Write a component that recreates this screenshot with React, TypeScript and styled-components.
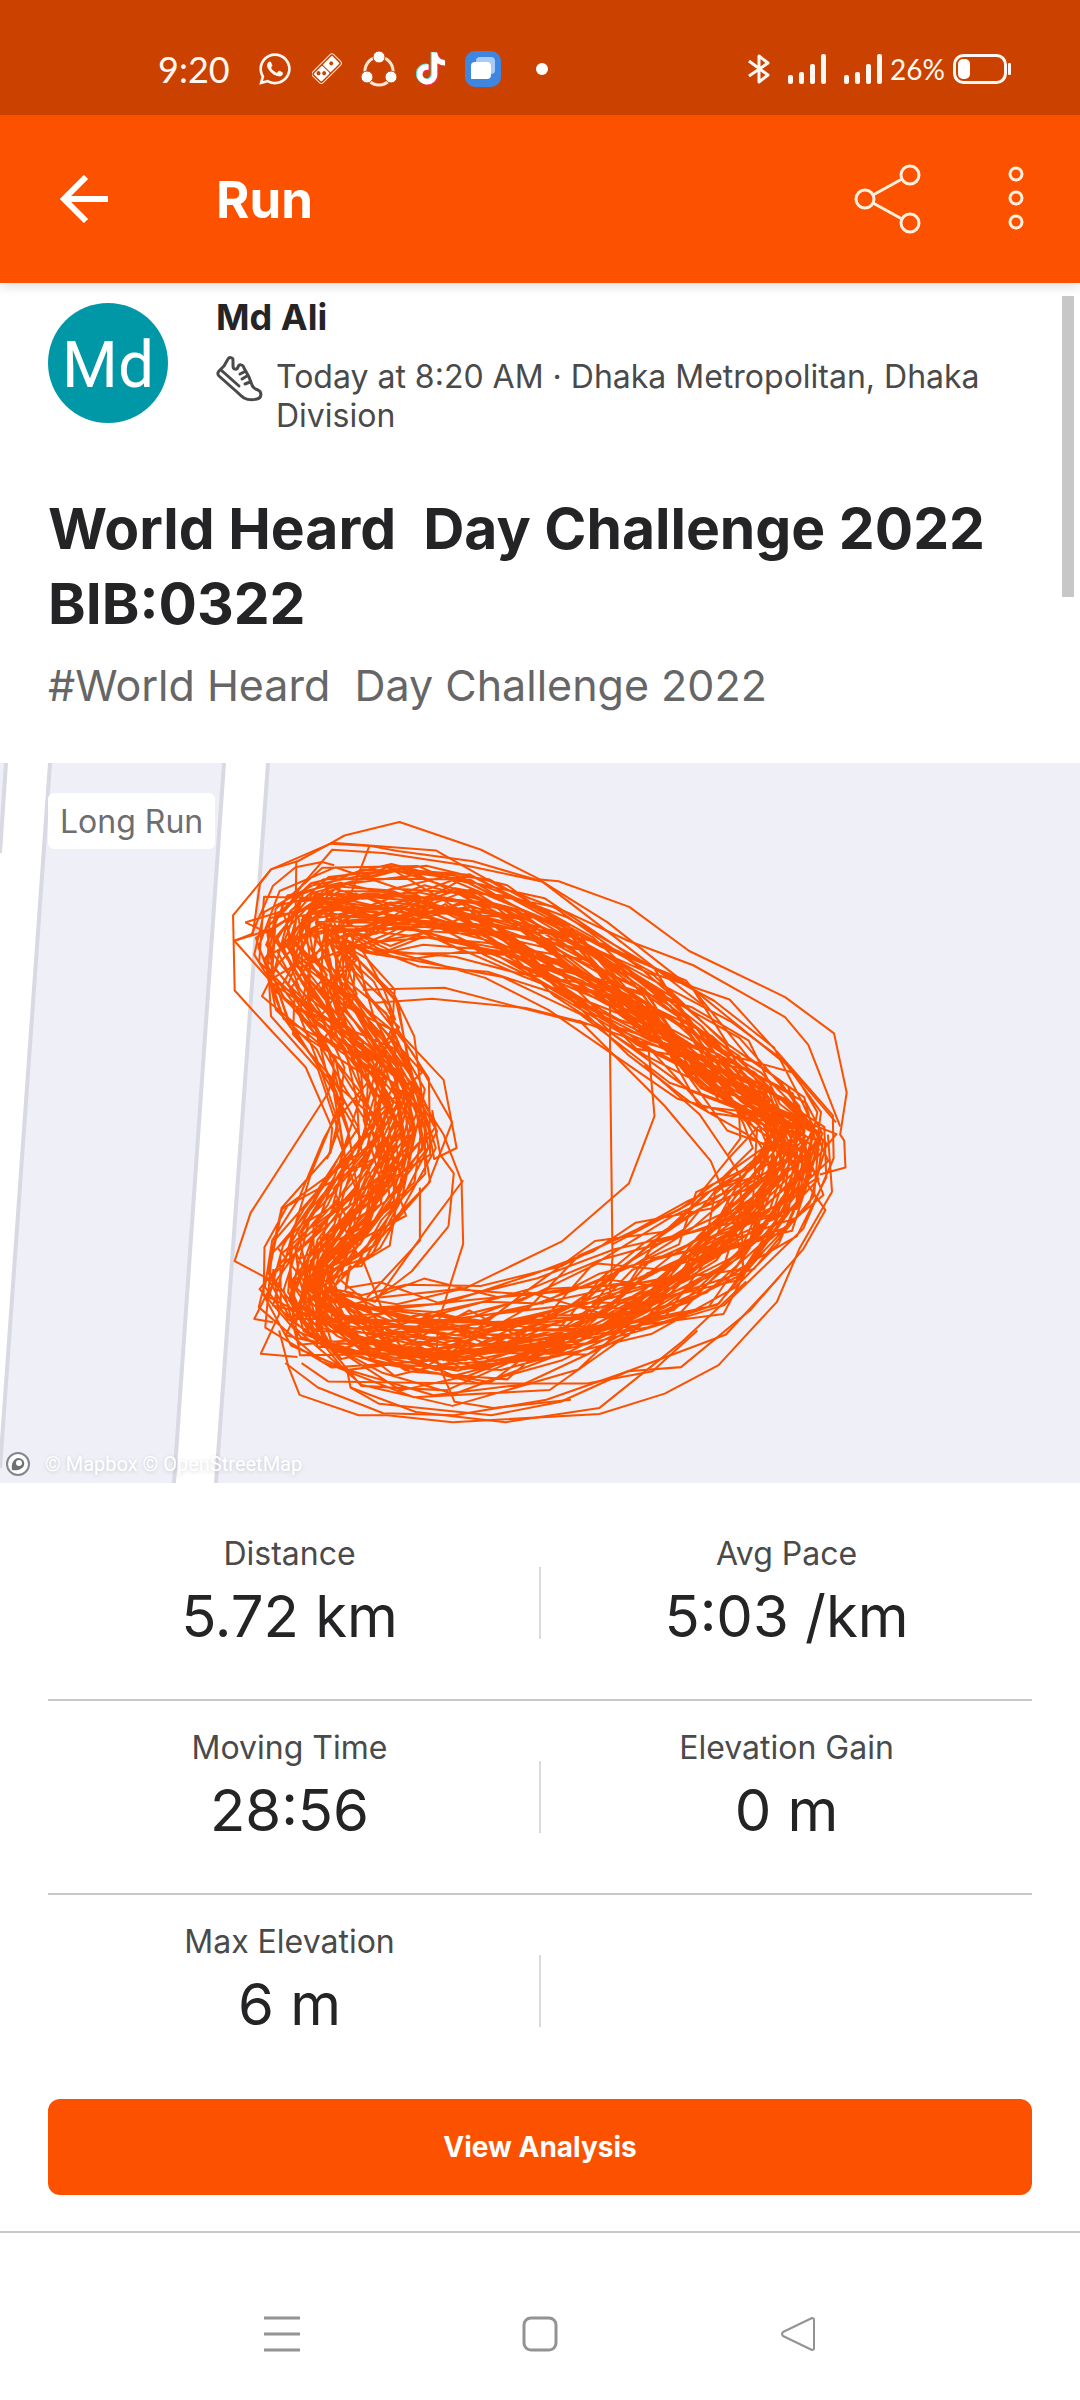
import React from "react";
import styled, { createGlobalStyle } from "styled-components";
import { FaWhatsapp } from "react-icons/fa";

const ORANGE = "#fc5200";
const INK = "#242426";
const GREY = "#4a4a4a";
const RULE = "#c8c8c8";

const GlobalStyle = createGlobalStyle`
  *, *::before, *::after { box-sizing: border-box; }
  body {
    margin: 0;
    background: #fff;
    color: ${INK};
    font-family: Inter, Roboto, "Liberation Sans", sans-serif;
  }
  h1, h2, p, dl, dt, dd { margin: 0; font-weight: inherit; }
  svg { display: block; flex: none; }
`;

const Screen = styled.div`
  display: flex;
  flex-direction: column;
  min-height: 100vh;
  background: #fff;
`;

const StatusBar = styled.div`
  position: relative;
  z-index: 1;
  display: flex;
  align-items: center;
  justify-content: space-between;
  height: 115px;
  padding: 22px 69px 0 158px;
  background: #cb4200;
  color: #fff8f2;
  font-family: Lato, "Open Sans", sans-serif;
`;

const StatusGroup = styled.div<{ $gap: number }>`
  display: flex;
  align-items: center;
  gap: ${(p) => p.$gap}px;
`;

const Clock = styled.span`
  padding-right: 8px;
  font-size: 36px;
  line-height: 40px;
`;

const Percent = styled.span`
  font-size: 28px;
  line-height: 32px;
`;

const AppBar = styled.header`
  position: relative;
  display: flex;
  align-items: center;
  height: 168px;
  padding: 0 48px;
  background: ${ORANGE};
  color: #fff;
  box-shadow: 0 2px 12px rgba(0, 0, 0, 0.16);
`;

const IconButton = styled.button`
  display: flex;
  align-items: center;
  justify-content: center;
  width: 72px;
  height: 72px;
  padding: 0;
  border: 0;
  background: none;
  color: inherit;
`;

const BarTitle = styled.h1`
  flex: 1;
  padding: 2px 0 0 96px;
  font-size: 51px;
  font-weight: 700;
  line-height: 60px;
`;

const BarActions = styled.div`
  display: flex;
  gap: 56px;
  margin-right: -20px;
`;

const Content = styled.main`
  position: relative;
  flex: 1;
`;

const ScrollThumb = styled.div`
  position: absolute;
  top: 13px;
  right: 6px;
  width: 12px;
  height: 301px;
  background: #c7c7c7;
`;

const Athlete = styled.section`
  display: flex;
  align-items: flex-start;
  gap: 48px;
  padding: 12px 72px 0 48px;
`;

const Avatar = styled.div`
  display: flex;
  align-items: center;
  justify-content: center;
  flex: none;
  width: 120px;
  height: 120px;
  margin-top: 8px;
  padding-top: 4px;
  border-radius: 50%;
  background: #0097a7;
  color: #fff;
  font-family: Roboto, sans-serif;
  font-size: 64px;
`;

const AthleteName = styled.h2`
  font-size: 36px;
  font-weight: 700;
  line-height: 44px;
`;

const Meta = styled.div`
  display: flex;
  align-items: flex-start;
  gap: 13px;
  padding-top: 17px;
`;

const MetaText = styled.p`
  padding-top: 1px;
  color: ${GREY};
  font-size: 32px;
  line-height: 39px;
`;

const Heading = styled.section`
  padding: 56px 48px 50px;
`;

const Title = styled.h2`
  font-size: 57px;
  font-weight: 700;
  line-height: 75px;
  white-space: pre-wrap;
`;

const Subtitle = styled.p`
  padding-top: 16px;
  color: #666;
  font-size: 43px;
  line-height: 56px;
  white-space: pre-wrap;
`;

const MapPanel = styled.section`
  position: relative;
  background: #efeff7;
`;

const MapDrawing = styled.svg`
  width: 100%;
  height: auto;
`;

const MapTag = styled.span`
  position: absolute;
  top: 30px;
  left: 48px;
  padding: 9px 12px 7px;
  border-radius: 6px;
  background: #fff;
  color: #6d6d72;
  font-size: 32px;
  line-height: 40px;
`;

const Attribution = styled.div`
  position: absolute;
  left: 6px;
  bottom: 6px;
  display: flex;
  align-items: center;
  gap: 14px;
  color: #fff;
  font-family: Roboto, sans-serif;
  font-size: 20px;
  line-height: 26px;
  text-shadow: 0 1px 4px rgba(0, 0, 0, 0.16);
`;

const Stats = styled.dl`
  padding: 24px 48px 0;
`;

const StatRow = styled.div`
  display: grid;
  grid-template-columns: 1fr 2px 1fr;
  height: 194px;
  border-bottom: 2px solid ${RULE};
  &:last-child { border-bottom-color: transparent; }
`;

const Stat = styled.div`
  display: flex;
  flex-direction: column;
  align-items: center;
  padding-top: 27px;
  &:first-child { padding-right: 8px; }
`;

const StatLabel = styled.dt`
  color: ${GREY};
  font-size: 32px;
  line-height: 40px;
`;

const StatValue = styled.dd`
  font-size: 58px;
  line-height: 84px;
`;

const StatDivider = styled.div`
  height: 72px;
  margin-top: 60px;
  background: #dadada;
`;

const Actions = styled.section`
  padding: 10px 48px 36px;
  border-bottom: 2px solid ${RULE};
`;

const PrimaryButton = styled.button`
  display: block;
  width: 100%;
  height: 96px;
  border: 0;
  border-radius: 12px;
  background: ${ORANGE};
  color: #fff;
  font-family: inherit;
  font-size: 28px;
  font-weight: 700;
`;

const NavBar = styled.nav`
  display: flex;
  justify-content: center;
  gap: 186px;
  padding: 24px 0 30px;
  color: #939393;
`;

/* Track edges along one lap: [outer x, outer y, inner x, inner y, lane bias]. */
const TRACK: number[][] = [
  [150, 200, 340, 380, 0.48],
  [290, 160, 350, 410, 0.45],
  [450, 150, 450, 430, 0.44],
  [620, 190, 600, 440, 0.43],
  [820, 250, 730, 480, 0.43],
  [1010, 360, 880, 560, 0.46],
  [1200, 470, 1050, 680, 0.48],
  [1350, 580, 1170, 770, 0.5],
  [1470, 700, 1260, 820, 0.5],
  [1545, 800, 1300, 850, 0.5],
  [1520, 940, 1260, 880, 0.5],
  [1460, 1100, 1190, 950, 0.54],
  [1320, 1270, 1080, 1040, 0.6],
  [1120, 1380, 950, 1110, 0.62],
  [910, 1470, 810, 1175, 0.63],
  [680, 1510, 640, 1215, 0.61],
  [460, 1510, 460, 1225, 0.59],
  [270, 1440, 350, 1215, 0.55],
  [140, 1340, 310, 1190, 0.5],
  [80, 1220, 300, 1160, 0.5],
  [85, 1080, 390, 1120, 0.5],
  [150, 960, 480, 1030, 0.5],
  [240, 860, 540, 910, 0.53],
  [270, 760, 550, 790, 0.54],
  [210, 650, 520, 660, 0.54],
  [130, 550, 460, 550, 0.5],
  [65, 450, 410, 440, 0.48],
  [50, 320, 360, 390, 0.5],
];

function random(seed: number) {
  let s = seed;
  return () => {
    s = (s * 1664525 + 1013904223) % 4294967296;
    return s / 4294967296;
  };
}

function lapsPath(laps: number) {
  const next = random(322);
  const bell = () => (next() + next() + next() + next() - 2) / 2;
  const n = TRACK.length;
  let d = "";
  let drift = 0;
  let u = 0;
  while (u < laps * n) {
    const i = Math.floor(u) % n;
    const f = u - Math.floor(u);
    const a = TRACK[i];
    const b = TRACK[(i + 1) % n];
    const at = (k: number) => a[k] + (b[k] - a[k]) * f;
    drift = drift * 0.78 + bell() * 0.7;
    const t = at(4) + 0.64 * Math.tanh((drift + bell() * 0.25) * 1.2);
    const x = at(0) + (at(2) - at(0)) * t + bell() * 26;
    const y = at(1) + (at(3) - at(1)) * t + bell() * 26;
    d += `${d ? "L" : "M"}${x.toFixed(0)} ${y.toFixed(0)}`;
    u += 0.8 + next() * 0.7;
  }
  return d;
}

const ROUTE = lapsPath(70);

/* Laps that stray from the main track. */
const STRAYS = [
  "190 150 125 170 32 283 36 467 130 570 210 655 275 805 270 860",
  "185 300 187 152 270 107 305 87 440 54 640 122 785 195 830 199 1003 262 1150 370 1385 483 1505 572 1536 717 1520 820 1530 835 1533 901 1470 918",
  "80 330 98 205 125 170 275 105 530 124 690 215 850 275 1000 345 1160 405 1385 532 1442 600 1520 800",
  "62 300 160 270 200 210 275 122 400 130 600 160 790 200 950 300 1180 480 1390 650 1510 790",
  "62 300 110 322 35 345 120 440 125 530 240 660 290 810 262 880",
  "270 107 370 113 435 125 620 150 790 200 960 330 1180 500",
  "366 113 290 310 240 400",
  "36 345 78 328 130 210 185 165 250 152 280 160",
  "130 1180 36 1130 75 1012 265 718 280 660",
  "130 1280 84 1272 115 1210 200 1090",
  "190 1365 100 1357 145 1260 130 1150",
  "145 1300 168 1390 195 1458 340 1508 410 1508 570 1525 930 1505 1090 1455 1222 1385 1365 1230 1420 1100 1500 960 1490 820",
  "160 1380 240 1440 400 1503 575 1508 800 1470 1000 1400 1130 1390 1300 1250 1430 1100 1484 1005 1410 900",
  "200 1380 265 1425 600 1430 900 1430 1060 1400 1170 1300",
  "320 1440 390 1480 665 1508 835 1475 1000 1400 1240 1310 1370 1170",
  "1290 1180 1130 1330 930 1490 700 1525 480 1500 320 1440 310 1390",
  "530 1370 575 1475 670 1490 860 1470",
  "530 1370 535 1280 596 1088 592 935 548 820 500 745",
  "596 932 515 1040 380 1230 300 1210",
  "430 560 548 686 580 853 525 880 510 800",
  "560 1045 470 1155 385 1220 600 1197 838 1082 1002 940 1065 775 1050 605",
  "560 1045 573 915 540 870 520 760",
  "956 500 956 620 962 1120 955 1220",
  "880 540 1090 750 1203 885 1250 1000 1282 1140",
  "1040 650 1175 770 1250 880 1275 920 1282 1150",
  "1272 760 1275 830 1245 870",
  "380 497 520 487 750 510 890 545 1050 600",
  "350 465 550 460 720 505 900 550",
  "345 1115 400 1255 450 1290",
  "490 950 490 1080 360 1220",
  "960 1090 1160 985 1245 880 1320 800",
  "430 540 400 460 350 370",
];

function ShareCircleIcon() {
  return (
    <svg width="36" height="36" viewBox="0 0 36 36" aria-hidden="true">
      <circle cx="18" cy="20" r="14" fill="none" stroke="#ffe6d4" strokeWidth="3" />
      <g fill="#fff" stroke="#cb4200" strokeWidth="1">
        <circle cx="18" cy="6" r="6" />
        <circle cx="6" cy="26" r="6" />
        <circle cx="30" cy="26" r="6" />
      </g>
    </svg>
  );
}

function DominoIcon() {
  return (
    <svg width="30" height="32" viewBox="0 0 30 32" aria-hidden="true">
      <g transform="rotate(-45 15 16)">
        <rect x="0" y="8" width="30" height="15" rx="3" fill="none" stroke="#ffe6d4" strokeWidth="1" />
        <rect x="2" y="10" width="12" height="11" rx="1" fill="#fff" />
        <rect x="15" y="10" width="13" height="11" rx="1" fill="#fff" />
        <g fill="#cb4200">
          <circle cx="22" cy="15" r="2" />
          <circle cx="6" cy="13" r="2" />
          <circle cx="10" cy="17" r="2" />
        </g>
      </g>
    </svg>
  );
}

const TIKTOK =
  "M448,209.91a210.06,210.06,0,0,1-122.77-39.25V349.38A162.55,162.55,0,1,1,185,188.31V278.2a74.62,74.62,0,1,0,52.23,71.18V0l88,0a121.18,121.18,0,0,0,1.86,22.17h0A122.18,122.18,0,0,0,381,102.39a121.43,121.43,0,0,0,67,20.14Z";

function TiktokIcon() {
  return (
    <svg width="30" height="35" viewBox="-16 -16 480 544" aria-hidden="true">
      <path d={TIKTOK} fill="#4de8e0" transform="translate(-18 -10)" />
      <path d={TIKTOK} fill="#fb2a5b" transform="translate(18 14)" />
      <path d={TIKTOK} fill="#fff" />
    </svg>
  );
}

function WindowsIcon() {
  return (
    <svg width="36" height="36" viewBox="0 0 36 36" aria-hidden="true">
      <rect width="36" height="36" rx="10" fill="#3f86e0" />
      <rect x="11" y="6" width="19" height="17" rx="4" fill="#a9cbf7" />
      <path d="M10 11h12a4 4 0 0 1 4 4v9a4 4 0 0 1-4 4H6V15a4 4 0 0 1 4-4z" fill="#fff" />
    </svg>
  );
}

function BluetoothIcon() {
  return (
    <svg width="22" height="30" viewBox="0 0 22 30" fill="none" stroke="#fff8f2" strokeWidth="3" strokeLinejoin="round" aria-hidden="true">
      <path d="M1 7l19 14-9 7V2l9 7L1 22" />
    </svg>
  );
}

function SignalIcon() {
  return (
    <svg width="38" height="30" viewBox="0 0 38 30" fill="#fff8f2" aria-hidden="true">
      <rect x="0" y="21" width="5" height="9" rx="2" />
      <rect x="11" y="18" width="5" height="12" rx="2" />
      <rect x="22" y="10" width="5" height="20" rx="2" />
      <rect x="33" y="0" width="5" height="30" rx="2" />
    </svg>
  );
}

function BatteryIcon() {
  return (
    <svg width="58" height="30" viewBox="0 0 58 30" aria-hidden="true">
      <rect x="1.500" y="1.500" width="51" height="27" rx="9" fill="none" stroke="#fff8f2" strokeWidth="3" />
      <rect x="5" y="5" width="12" height="20" rx="5" fill="#fff" />
      <rect x="55" y="9" width="3" height="12" rx="1" fill="#fff8f2" />
    </svg>
  );
}

function ShoeIcon() {
  return (
    <svg width="47" height="47" viewBox="0 0 47 47" fill="none" stroke={GREY} strokeWidth="3" strokeLinecap="round" strokeLinejoin="round" aria-hidden="true">
      <path d="M12 3c1-2 5-2 5 1v6c0 4 4 4 5 1 1-3 5-3 6 1l5 9 3 8c1 3 3 4 6 5 4 2 4 8-1 9-4 1-9 1-13-1-3-2-5-4-7-6L3 20c-2-2-1-4 0-5l5-5z" />
      <path d="M5 14l18 16" />
      <path d="M24 18l4-2M26 23l5-3M29 28l5-2" />
    </svg>
  );
}

export default function App() {
  return (
    <>
      <GlobalStyle />
      <Screen>
        <StatusBar>
          <StatusGroup $gap={19}>
            <Clock>9:20</Clock>
            <FaWhatsapp size={36} aria-hidden="true" />
            <DominoIcon />
            <ShareCircleIcon />
            <TiktokIcon />
            <WindowsIcon />
            <svg width="42" height="12" viewBox="0 0 42 12" aria-hidden="true">
              <circle cx="22" cy="6" r="6" fill="#fff" />
            </svg>
          </StatusGroup>
          <StatusGroup $gap={8}>
            <StatusGroup $gap={18}>
              <BluetoothIcon />
              <SignalIcon />
              <SignalIcon />
            </StatusGroup>
            <Percent>26%</Percent>
            <BatteryIcon />
          </StatusGroup>
        </StatusBar>

        <AppBar>
          <IconButton type="button" aria-label="Back">
            <svg width="48" height="48" viewBox="0 0 48 48" fill="none" stroke="#fff" strokeWidth="6" aria-hidden="true">
              <path d="M26 2L4 24l22 22M4 24h44" />
            </svg>
          </IconButton>
          <BarTitle>Run</BarTitle>
          <BarActions>
            <IconButton type="button" aria-label="Share">
              <svg width="68" height="70" viewBox="0 0 68 70" fill="none" stroke="#fff0e0" strokeWidth="3" aria-hidden="true">
                <circle cx="11" cy="35" r="9" />
                <circle cx="56" cy="11" r="9" />
                <circle cx="56" cy="59" r="9" />
                <path d="M19 31l29-16M19 39l29 16" />
              </svg>
            </IconButton>
            <IconButton type="button" aria-label="More options">
              <svg width="16" height="66" viewBox="0 0 16 66" fill="none" stroke="#fff0e0" strokeWidth="3" aria-hidden="true">
                <circle cx="8" cy="8" r="6" />
                <circle cx="8" cy="32" r="6" />
                <circle cx="8" cy="56" r="6" />
              </svg>
            </IconButton>
          </BarActions>
        </AppBar>

        <Content>
          <ScrollThumb />
          <Athlete>
            <Avatar>Md</Avatar>
            <div>
              <AthleteName>Md Ali</AthleteName>
              <Meta>
                <ShoeIcon />
                <MetaText>Today at 8:20 AM · Dhaka Metropolitan, Dhaka Division</MetaText>
              </Meta>
            </div>
          </Athlete>

          <Heading>
            <Title>{"World Heard  Day Challenge 2022 BIB:0322"}</Title>
            <Subtitle>{"#World Heard  Day Challenge 2022"}</Subtitle>
          </Heading>

          <MapPanel>
            <MapDrawing viewBox="0 0 1080 720" role="img" aria-label="Map of the run">
              <path d="M6 0H50L0 705V90zM224 0H268L216 720H174z" fill="#fff" />
              <path d="M6 0L0 90M50 0L0 705M224 0L174 720M268 0L216 720" fill="none" stroke="#d9d9e3" strokeWidth="4" />
              <g transform="translate(220 37) scale(.408)" fill="none" stroke={ORANGE} strokeWidth="5" strokeLinejoin="round">
                <path d={ROUTE} />
                {STRAYS.map((points) => (
                  <polyline key={points} points={points} />
                ))}
              </g>
            </MapDrawing>
            <MapTag>Long Run</MapTag>
            <Attribution>
              <svg width="25" height="25" viewBox="0 0 25 25" aria-hidden="true">
                <circle cx="12" cy="12" r="11" fill="#fff" stroke="#85858c" strokeWidth="2" />
                <path d="M6 18c-1-6 1-11 6-12 4 0 7 3 6 7-1 4-6 6-12 5z" fill="#707078" />
                <circle cx="13" cy="11" r="3" fill="#fff" />
              </svg>
              <span>© Mapbox © OpenStreetMap</span>
            </Attribution>
          </MapPanel>

          <Stats>
            <StatRow>
              <Stat>
                <StatLabel>Distance</StatLabel>
                <StatValue>5.72 km</StatValue>
              </Stat>
              <StatDivider />
              <Stat>
                <StatLabel>Avg Pace</StatLabel>
                <StatValue>5:03 /km</StatValue>
              </Stat>
            </StatRow>
            <StatRow>
              <Stat>
                <StatLabel>Moving Time</StatLabel>
                <StatValue>28:56</StatValue>
              </Stat>
              <StatDivider />
              <Stat>
                <StatLabel>Elevation Gain</StatLabel>
                <StatValue>0 m</StatValue>
              </Stat>
            </StatRow>
            <StatRow>
              <Stat>
                <StatLabel>Max Elevation</StatLabel>
                <StatValue>6 m</StatValue>
              </Stat>
              <StatDivider />
            </StatRow>
          </Stats>

          <Actions>
            <PrimaryButton type="button">View Analysis</PrimaryButton>
          </Actions>
        </Content>

        <NavBar>
          <IconButton type="button" aria-label="Recent apps">
            <svg width="36" height="36" viewBox="0 0 36 36" stroke="currentColor" strokeWidth="3" aria-hidden="true">
              <path d="M0 2h36M0 18h36M0 34h36" />
            </svg>
          </IconButton>
          <IconButton type="button" aria-label="Home">
            <svg width="36" height="36" viewBox="0 0 36 36" fill="none" stroke="currentColor" strokeWidth="3" aria-hidden="true">
              <rect x="2" y="2" width="32" height="32" rx="7" />
            </svg>
          </IconButton>
          <IconButton type="button" aria-label="Back to previous screen">
            <svg width="36" height="36" viewBox="0 0 36 36" fill="none" stroke="currentColor" strokeWidth="2" strokeLinejoin="round" aria-hidden="true">
              <path d="M32 2L3 16q-2 2 0 4L32 34q2 0 2-2V4q0-2-2-2z" />
            </svg>
          </IconButton>
        </NavBar>
      </Screen>
    </>
  );
}
